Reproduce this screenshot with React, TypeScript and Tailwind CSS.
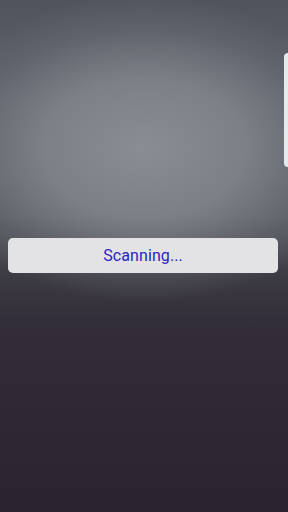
import React from 'react';

const App = () => {
  return (
    <div className="relative w-full h-[512px] overflow-hidden bg-[linear-gradient(to_bottom,#50545c_0%,#5c6068_20%,#595c63_42%,#3c3a43_54%,#322d38_64%,#2a2330_100%)] font-['Roboto',sans-serif]">
      {/* blurred backdrop */}
      <div className="absolute inset-0 bg-[radial-gradient(ellipse_78%_30%_at_50%_29%,rgba(140,143,150,0.95)_0%,rgba(132,136,143,0.8)_45%,rgba(110,114,121,0.4)_78%,rgba(90,94,100,0)_100%)]" />

      {/* side handle */}
      <div className="absolute right-0 top-[53px] w-[4px] h-[114px] rounded-l-[4px] bg-[#e8e9ec]" />

      <div className="relative pt-[238px] pl-[8px] pr-[10px]">
        <div className="h-[35px] rounded-[5px] bg-[#e3e3e6] flex items-center justify-center">
          <span className="text-[16px] text-[#2b24c4] tracking-[0.1px]">Scanning...</span>
        </div>
      </div>
    </div>
  );
};

export default App;
